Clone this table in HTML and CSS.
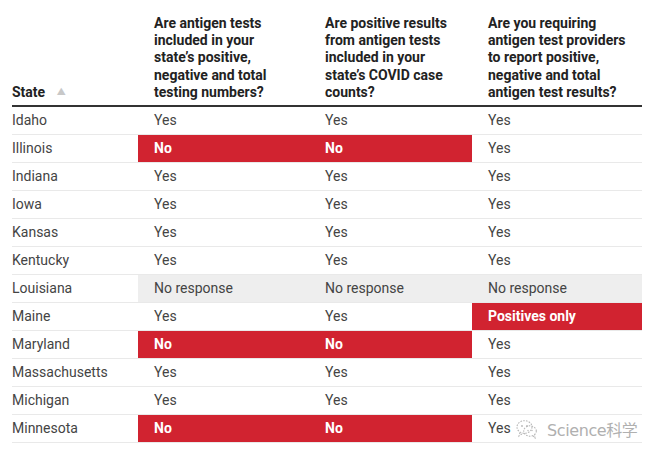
FILE: index.html
```html
<!DOCTYPE html>
<html>
<head>
<meta charset="utf-8">
<link rel="stylesheet" href="styles.css">
</head>
<body>
<div class="wrap">
<table class="grid">
  <colgroup>
    <col class="c-state">
    <col class="c-q1">
    <col class="c-q2">
    <col class="c-q3">
  </colgroup>
  <thead>
    <tr>
      <th class="h-state">State <span class="sort">&#9650;</span></th>
      <th class="h-q1">Are antigen tests included in your state’s positive, negative and total testing numbers?</th>
      <th>Are positive results from antigen tests included in your state’s COVID case counts?</th>
      <th>Are you requiring antigen test providers to report positive, negative and total antigen test results?</th>
    </tr>
  </thead>
  <tbody>
    <tr><td class="st">Idaho</td><td>Yes</td><td>Yes</td><td>Yes</td></tr>
    <tr><td class="st">Illinois</td><td class="red">No</td><td class="red">No</td><td>Yes</td></tr>
    <tr><td class="st">Indiana</td><td>Yes</td><td>Yes</td><td>Yes</td></tr>
    <tr><td class="st">Iowa</td><td>Yes</td><td>Yes</td><td>Yes</td></tr>
    <tr><td class="st">Kansas</td><td>Yes</td><td>Yes</td><td>Yes</td></tr>
    <tr><td class="st">Kentucky</td><td>Yes</td><td>Yes</td><td>Yes</td></tr>
    <tr><td class="st">Louisiana</td><td class="gray">No response</td><td class="gray">No response</td><td class="gray">No response</td></tr>
    <tr><td class="st">Maine</td><td>Yes</td><td>Yes</td><td class="red">Positives only</td></tr>
    <tr><td class="st">Maryland</td><td class="red">No</td><td class="red">No</td><td>Yes</td></tr>
    <tr><td class="st">Massachusetts</td><td>Yes</td><td>Yes</td><td>Yes</td></tr>
    <tr><td class="st">Michigan</td><td>Yes</td><td>Yes</td><td>Yes</td></tr>
    <tr><td class="st">Minnesota</td><td class="red">No</td><td class="red">No</td><td>Yes</td></tr>
  </tbody>
</table>
<div class="mark">
  <svg class="mark-icon" width="22" height="20" viewBox="0 0 22 20">
    <g fill="none" stroke="#b8b8b8" stroke-width="1.1" stroke-dasharray="1.6 1.2">
      <ellipse cx="8.5" cy="8" rx="7.5" ry="6.3"/>
      <path d="M4 13.5 L3 17 L7 14.3"/>
      <ellipse cx="14" cy="12" rx="6.3" ry="5.2"/>
      <path d="M17 16.8 L19 19 L18.6 16"/>
    </g>
    <circle cx="6" cy="7" r="0.9" fill="#b8b8b8"/>
    <circle cx="11" cy="7" r="0.9" fill="#b8b8b8"/>
    <circle cx="12" cy="11.5" r="0.7" fill="#b8b8b8"/>
    <circle cx="16" cy="11.5" r="0.7" fill="#b8b8b8"/>
  </svg>
  <span class="mark-text">Science科学</span>
</div>
</div>
</body>
</html>
```
FILE: styles.css
```css
html, body {
  margin: 0;
  padding: 0;
  background: #ffffff;
}
body {
  font-family: Roboto, "Noto Sans", "Noto Sans CJK SC", sans-serif;
  color: #333333;
}
.wrap {
  position: relative;
  padding: 15px 15px 0 12px;
}
.grid {
  border-collapse: collapse;
  width: 630px;
  table-layout: fixed;
  font-size: 14px;
}
.c-state { width: 126px; }
.c-q1 { width: 171px; }
.c-q2 { width: 163px; }
.c-q3 { width: 170px; }
.grid th {
  text-align: left;
  vertical-align: bottom;
  font-weight: 700;
  color: #222222;
  line-height: 17.2px;
  padding: 0 8px 4px 16px;
  border-bottom: 2px solid #333333;
}
.grid th.h-q1 {
  padding-right: 30px;
}
.grid th.h-state {
  padding-left: 0;
}
.sort {
  font-size: 9px;
  color: #c8c8c8;
  margin-left: 8px;
  vertical-align: 2px;
}
.grid td {
  height: 27px;
  padding: 0 8px 0 16px;
  line-height: 17px;
  border-bottom: 1px solid #e9e9e9;
  color: #444444;
  vertical-align: middle;
  white-space: nowrap;
}
.grid td.st {
  padding-left: 0;
}
.grid td.red {
  background: #d12330;
  color: #ffffff;
  font-weight: 700;
}
.grid td.gray {
  background: #eeeeee;
}
.mark {
  position: absolute;
  left: 516px;
  top: 417px;
  display: flex;
  align-items: center;
  gap: 9px;
}
.mark-text {
  font-family: "DejaVu Sans", "Noto Sans CJK SC", sans-serif;
  font-size: 16px;
  color: #b0b0b0;
  text-shadow: 0 0 1px #ffffff;
  letter-spacing: -0.4px;
}
```
